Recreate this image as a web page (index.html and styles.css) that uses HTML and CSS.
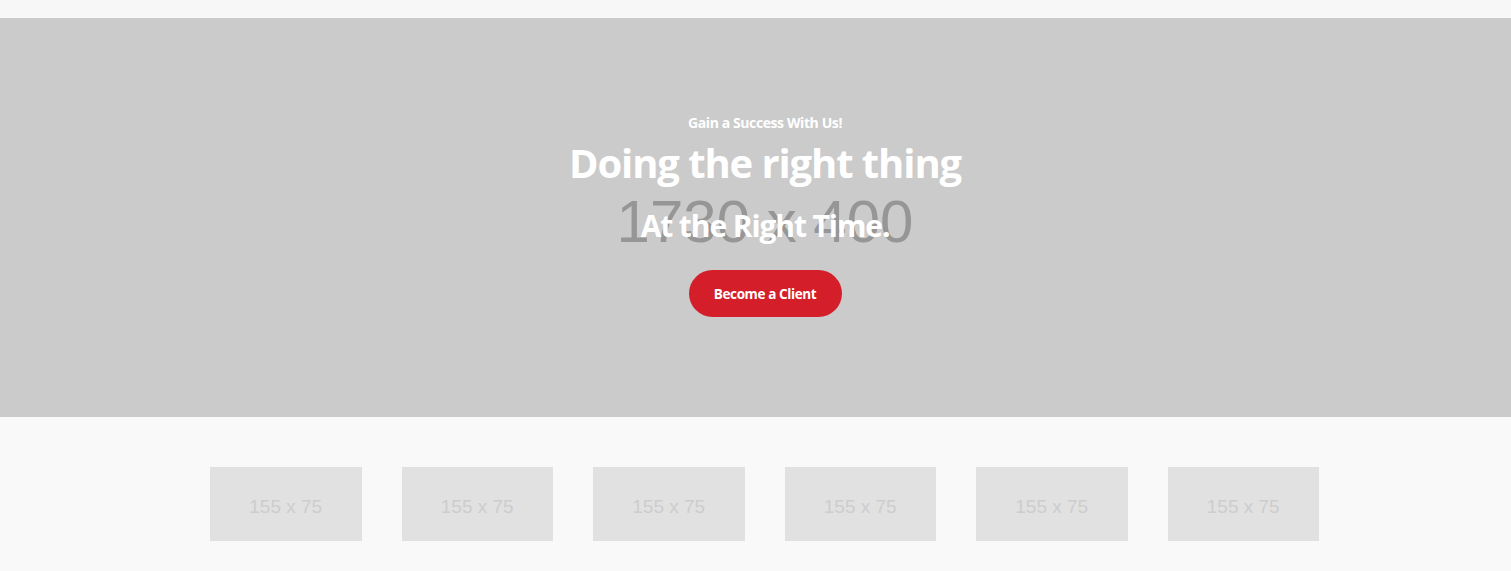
FILE: index.html
```html
<!DOCTYPE html>
<html lang="en">
<head>
<meta charset="utf-8">
<title>Doing the right thing</title>
<link rel="stylesheet" href="styles.css">
</head>
<body>
<div class="topbar"></div>
<section class="hero">
  <div class="hero-bg">1730 x 400</div>
  <div class="hero-content">
    <p class="eyebrow">Gain a Success With Us!</p>
    <h1 class="title">Doing the right thing</h1>
    <h2 class="subtitle">At the Right Time.</h2>
    <a class="btn" href="#">Become a Client</a>
  </div>
</section>
<section class="clients">
  <div class="client-grid">
    <div class="logo">155 x 75</div>
    <div class="logo">155 x 75</div>
    <div class="logo">155 x 75</div>
    <div class="logo">155 x 75</div>
    <div class="logo">155 x 75</div>
    <div class="logo">155 x 75</div>
  </div>
</section>
</body>
</html>
```
FILE: styles.css
```css
* { box-sizing: border-box; }
html, body { margin: 0; padding: 0; }
body {
  background: #f9f9f9;
  font-family: "Open Sans", "Noto Sans", sans-serif;
}
.topbar {
  height: 18px;
  background: #f7f7f7;
}
.hero {
  height: 399px;
  background: #cbcbcb;
  display: grid;
  padding-left: 19px;
}
.hero-bg {
  grid-area: 1 / 1;
  place-self: center;
  margin-top: 8px;
  font-family: "Liberation Sans", Arial, sans-serif;
  font-size: 60px;
  color: #969696;
  line-height: 1;
}
.hero-content {
  grid-area: 1 / 1;
  display: flex;
  flex-direction: column;
  align-items: center;
  padding-top: 95px;
  color: #fff;
  text-align: center;
}
.eyebrow {
  margin: 0;
  font-size: 14px;
  font-weight: 700;
  line-height: 20px;
  letter-spacing: -0.4px;
}
.title {
  margin: 4px 0 0;
  font-size: 40px;
  font-weight: 700;
  line-height: 52px;
  letter-spacing: -1.1px;
}
.subtitle {
  margin: 17px 0 0;
  font-size: 30px;
  font-weight: 700;
  line-height: 40px;
  letter-spacing: -1.1px;
}
.btn {
  margin-top: 24px;
  display: flex;
  align-items: center;
  justify-content: center;
  width: 153px;
  height: 47px;
  border-radius: 24px;
  background: #d41f2b;
  color: #fff;
  text-decoration: none;
  font-size: 13.5px;
  font-weight: 700;
  letter-spacing: -0.4px;
}
.clients {
  padding: 50px 0 30px 18px;
}
.client-grid {
  display: grid;
  grid-template-columns: repeat(6, 151.5px);
  column-gap: 40px;
  justify-content: center;
}
.logo {
  height: 74px;
  padding-top: 6px;
  background: #e1e1e1;
  color: #cdcdcd;
  font-family: "Liberation Sans", Arial, sans-serif;
  font-size: 19px;
  display: flex;
  align-items: center;
  justify-content: center;
}
```
